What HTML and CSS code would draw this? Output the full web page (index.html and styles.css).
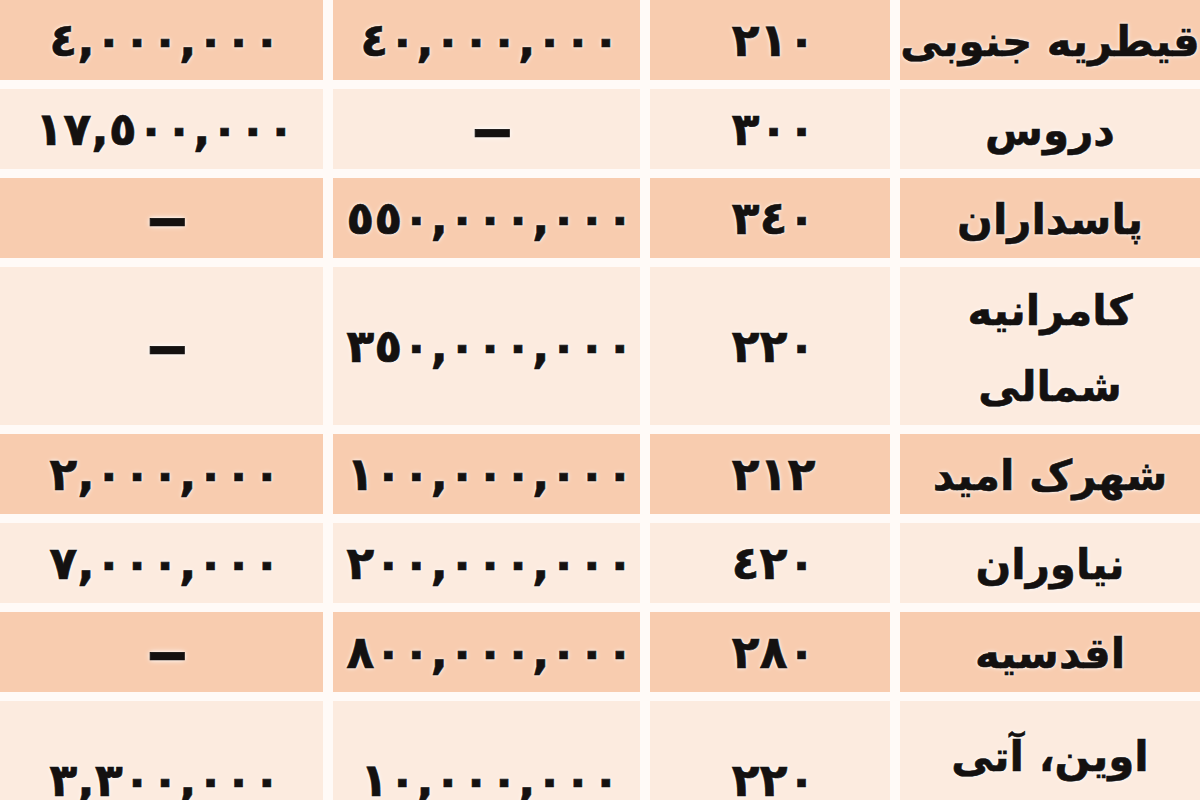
FILE: index.html
```html
<!DOCTYPE html>
<html lang="fa" dir="rtl">
<head>
<meta charset="utf-8">
<title>قیمت زمین</title>
<link rel="stylesheet" href="styles.css">
</head>
<body>
<div class="table">
  <div class="row dark">
    <div class="cell name">قیطریه جنوبی</div>
    <div class="cell num">٢١٠</div>
    <div class="cell num">٤٠,٠٠٠,٠٠٠</div>
    <div class="cell num">٤,٠٠٠,٠٠٠</div>
  </div>
  <div class="row light">
    <div class="cell name">دروس</div>
    <div class="cell num">٣٠٠</div>
    <div class="cell num"><span class="dash">–</span></div>
    <div class="cell num">١٧,٥٠٠,٠٠٠</div>
  </div>
  <div class="row dark">
    <div class="cell name">پاسداران</div>
    <div class="cell num">٣٤٠</div>
    <div class="cell num">٥٥٠,٠٠٠,٠٠٠</div>
    <div class="cell num"><span class="dash">–</span></div>
  </div>
  <div class="row light tall">
    <div class="cell name top">کامرانیه<br>شمالی</div>
    <div class="cell num">٢٢٠</div>
    <div class="cell num">٣٥٠,٠٠٠,٠٠٠</div>
    <div class="cell num"><span class="dash">–</span></div>
  </div>
  <div class="row dark">
    <div class="cell name">شهرک امید</div>
    <div class="cell num">٢١٢</div>
    <div class="cell num">١٠٠,٠٠٠,٠٠٠</div>
    <div class="cell num">٢,٠٠٠,٠٠٠</div>
  </div>
  <div class="row light">
    <div class="cell name">نیاوران</div>
    <div class="cell num">٤٢٠</div>
    <div class="cell num">٢٠٠,٠٠٠,٠٠٠</div>
    <div class="cell num">٧,٠٠٠,٠٠٠</div>
  </div>
  <div class="row dark">
    <div class="cell name">اقدسیه</div>
    <div class="cell num">٢٨٠</div>
    <div class="cell num">٨٠٠,٠٠٠,٠٠٠</div>
    <div class="cell num"><span class="dash">–</span></div>
  </div>
  <div class="row light tall">
    <div class="cell name top lower">اوین، آتی</div>
    <div class="cell num">٢٢٠</div>
    <div class="cell num">١٠,٠٠٠,٠٠٠</div>
    <div class="cell num">٣,٣٠٠,٠٠٠</div>
  </div>
</div>
</body>
</html>
```
FILE: styles.css
```css
html, body {
  margin: 0;
  padding: 0;
  background: #fffaf7;
  overflow: hidden;
}

body {
  width: 1200px;
  height: 800px;
  font-family: "DejaVu Sans", sans-serif;
  font-weight: bold;
  color: #141110;
}

.table {
  display: flex;
  flex-direction: column;
  gap: 9px;
  direction: rtl;
}

.row {
  display: grid;
  grid-template-columns: 300px 240px 307px 323px;
  column-gap: 10px;
  height: 80px;
}

.row.tall {
  height: 158px;
}

.cell {
  display: flex;
  align-items: center;
  justify-content: center;
  text-align: center;
  white-space: nowrap;
  -webkit-text-stroke: 0.6px #141110;
  text-shadow: 0 0 3px #fff, 0 0 5px rgba(255, 255, 255, 0.8);
}

.dark .cell {
  background: #f8ccaf;
}

.light .cell {
  background: #fcebdf;
}

.name {
  font-size: 42px;
  line-height: 76px;
  padding-top: 4px;
  box-sizing: border-box;
}

.name.top {
  align-items: flex-start;
  padding-top: 6px;
}

.name.top.lower {
  padding-top: 18px;
}

.num {
  direction: ltr;
  font-size: 46px;
  letter-spacing: 7px;
  text-indent: 7px;
}

.dash {
  display: inline-block;
  font-size: 58px;
  letter-spacing: 0;
  transform: scale(1.5, 1.05);
}
```
